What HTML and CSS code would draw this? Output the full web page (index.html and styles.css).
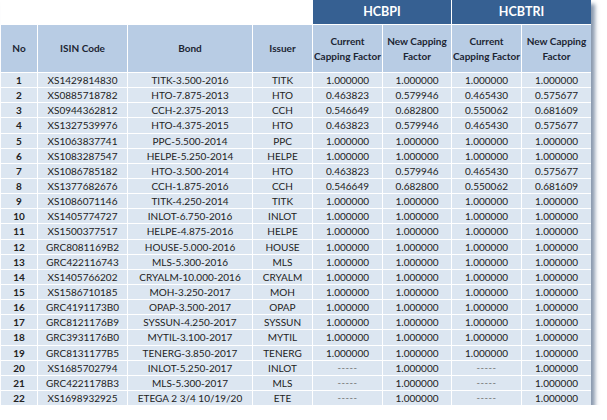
FILE: index.html
```html
<!DOCTYPE html>
<html>
<head>
<meta charset="utf-8">
<link rel="stylesheet" href="styles.css">
</head>
<body>
<div class="sheet">
  <div class="blank"></div><div class="blank"></div><div class="blank"></div><div class="blank"></div>
  <div class="group span2">HCBPI</div>
  <div class="group span2">HCBTRI</div>

  <div class="head">No</div>
  <div class="head">ISIN Code</div>
  <div class="head">Bond</div>
  <div class="head">Issuer</div>
  <div class="head">Current<br>Capping Factor</div>
  <div class="head">New Capping<br>Factor</div>
  <div class="head">Current<br>Capping Factor</div>
  <div class="head">New Capping<br>Factor</div>

  <div class="no">1</div><div>XS1429814830</div><div>TITK-3.500-2016</div><div>TITK</div><div>1.000000</div><div>1.000000</div><div>1.000000</div><div>1.000000</div>
  <div class="no">2</div><div>XS0885718782</div><div>HTO-7.875-2013</div><div>HTO</div><div>0.463823</div><div>0.579946</div><div>0.465430</div><div>0.575677</div>
  <div class="no">3</div><div>XS0944362812</div><div>CCH-2.375-2013</div><div>CCH</div><div>0.546649</div><div>0.682800</div><div>0.550062</div><div>0.681609</div>
  <div class="no">4</div><div>XS1327539976</div><div>HTO-4.375-2015</div><div>HTO</div><div>0.463823</div><div>0.579946</div><div>0.465430</div><div>0.575677</div>
  <div class="no">5</div><div>XS1063837741</div><div>PPC-5.500-2014</div><div>PPC</div><div>1.000000</div><div>1.000000</div><div>1.000000</div><div>1.000000</div>
  <div class="no">6</div><div>XS1083287547</div><div>HELPE-5.250-2014</div><div>HELPE</div><div>1.000000</div><div>1.000000</div><div>1.000000</div><div>1.000000</div>
  <div class="no">7</div><div>XS1086785182</div><div>HTO-3.500-2014</div><div>HTO</div><div>0.463823</div><div>0.579946</div><div>0.465430</div><div>0.575677</div>
  <div class="no">8</div><div>XS1377682676</div><div>CCH-1.875-2016</div><div>CCH</div><div>0.546649</div><div>0.682800</div><div>0.550062</div><div>0.681609</div>
  <div class="no">9</div><div>XS1086071146</div><div>TITK-4.250-2014</div><div>TITK</div><div>1.000000</div><div>1.000000</div><div>1.000000</div><div>1.000000</div>
  <div class="no">10</div><div>XS1405774727</div><div>INLOT-6.750-2016</div><div>INLOT</div><div>1.000000</div><div>1.000000</div><div>1.000000</div><div>1.000000</div>
  <div class="no">11</div><div>XS1500377517</div><div>HELPE-4.875-2016</div><div>HELPE</div><div>1.000000</div><div>1.000000</div><div>1.000000</div><div>1.000000</div>
  <div class="no">12</div><div>GRC8081169B2</div><div>HOUSE-5.000-2016</div><div>HOUSE</div><div>1.000000</div><div>1.000000</div><div>1.000000</div><div>1.000000</div>
  <div class="no">13</div><div>GRC422116743</div><div>MLS-5.300-2016</div><div>MLS</div><div>1.000000</div><div>1.000000</div><div>1.000000</div><div>1.000000</div>
  <div class="no">14</div><div>XS1405766202</div><div>CRYALM-10.000-2016</div><div>CRYALM</div><div>1.000000</div><div>1.000000</div><div>1.000000</div><div>1.000000</div>
  <div class="no">15</div><div>XS1586710185</div><div>MOH-3.250-2017</div><div>MOH</div><div>1.000000</div><div>1.000000</div><div>1.000000</div><div>1.000000</div>
  <div class="no">16</div><div>GRC4191173B0</div><div>OPAP-3.500-2017</div><div>OPAP</div><div>1.000000</div><div>1.000000</div><div>1.000000</div><div>1.000000</div>
  <div class="no">17</div><div>GRC8121176B9</div><div>SYSSUN-4.250-2017</div><div>SYSSUN</div><div>1.000000</div><div>1.000000</div><div>1.000000</div><div>1.000000</div>
  <div class="no">18</div><div>GRC3931176B0</div><div>MYTIL-3.100-2017</div><div>MYTIL</div><div>1.000000</div><div>1.000000</div><div>1.000000</div><div>1.000000</div>
  <div class="no">19</div><div>GRC8131177B5</div><div>TENERG-3.850-2017</div><div>TENERG</div><div>1.000000</div><div>1.000000</div><div>1.000000</div><div>1.000000</div>
  <div class="no">20</div><div>XS1685702794</div><div>INLOT-5.250-2017</div><div>INLOT</div><div class="dash">-----</div><div>1.000000</div><div class="dash">-----</div><div>1.000000</div>
  <div class="no">21</div><div>GRC4221178B3</div><div>MLS-5.300-2017</div><div>MLS</div><div class="dash">-----</div><div>1.000000</div><div class="dash">-----</div><div>1.000000</div>
  <div class="no">22</div><div>XS1698932925</div><div>ETEGA 2 3/4 10/19/20</div><div>ETE</div><div class="dash">-----</div><div>1.000000</div><div class="dash">-----</div><div>1.000000</div>
</div>
</body>
</html>
```
FILE: styles.css
```css
html, body {
  margin: 0;
  padding: 0;
  background: #ffffff;
}

.sheet {
  margin-left: 1px;
  width: 590px;
  display: grid;
  grid-template-columns: 36px 89px 124px 59px 69px 68px 69px 69px;
  grid-template-rows: 24px 47px;
  grid-auto-rows: 14.15px;
  gap: 1px;
  background: #ffffff;
  box-shadow: 4px 4px 4px rgba(60, 85, 120, 0.6);
  font-family: Lato, "Liberation Sans", sans-serif;
  font-size: 10px;
  color: #222222;
}

.sheet > div {
  background: #dce6f1;
  display: flex;
  align-items: center;
  justify-content: center;
  text-align: center;
  line-height: 1;
  white-space: nowrap;
}

.sheet > .blank {
  background: #ffffff;
}

.sheet > .group {
  background: #366092;
  color: #ffffff;
  font-weight: 700;
  font-size: 12.5px;
}

.span2 {
  grid-column: span 2;
}

.sheet > .head {
  background: #b8cce4;
  font-weight: 700;
  color: #1c2533;
  line-height: 15px;
}

.sheet > .no {
  font-weight: 700;
}

.sheet > .dash {
  color: #707070;
  font-size: 9.5px;
  letter-spacing: 0.5px;
}
```
